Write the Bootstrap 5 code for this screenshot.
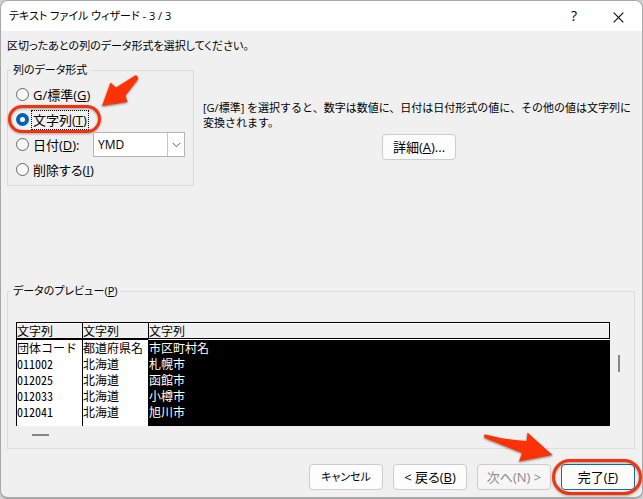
<!DOCTYPE html>
<html lang="ja">
<head>
<meta charset="utf-8">
<meta name="viewport" content="width=device-width, initial-scale=1">
<title>テキスト ファイル ウィザード - 3 / 3</title>
<link href="https://cdn.jsdelivr.net/npm/bootstrap@5.3.0/dist/css/bootstrap.min.css" rel="stylesheet">
<style>
body{background:#cfcfcf;color:#000;font:11px/16px "Open Sans","Noto Sans CJK JP",sans-serif;font-feature-settings:"palt","kern"}
.wizard{background:#f0f0f0;border:1px solid #a8a8a8;border-bottom-width:2px;border-radius:8px;min-height:100vh;overflow:hidden}
.titlebar{background:#fff;height:30px;padding:0 2px 0 8px}
.tool-btn{width:44px;height:28px;border:0;background:none;padding:0;font-size:14px;line-height:28px}
.wizard-body{padding:7px 7px 7px 6px}
.group{border:1px solid #dcdcdc;padding:0}
.group>legend{float:none;width:auto;font-size:11px;line-height:18px;margin:0 0 0 3px;padding:0 2px}
.formats{width:187px;height:125px;margin-top:7px}
.formats>legend{margin-bottom:3px}
.formats .choice{height:25px;padding-left:8px}
.formats .choice label{margin-left:3px;padding:0 1px;font-size:13px;line-height:18px}
.choice input{appearance:none;width:13px;height:13px;border:1px solid #666;border-radius:50%;background:#f7f7f7;margin:0;flex:none}
.choice input:checked{border:4px solid #0560b6;background:#fff}
.choice input:checked+label{outline:1px dotted #000}
.date-select{appearance:none;width:92px;height:25px;border:1px solid #b4b4b4;border-radius:0;background:#fff;padding:0 4px;font:inherit;font-size:12px;color:#000}
.drop{right:1px;top:1px;width:17px;height:23px;border-left:1px solid #c4c4c4;background:#fff;pointer-events:none}
.hint{padding:46px 0 0 9px;line-height:15px}
.hint-text{font-feature-settings:normal;white-space:nowrap}
.push{width:74px;height:26px;border:1px solid #ccc;border-radius:4px;background:#fdfdfd;color:#000;padding:0;font:inherit;font-size:13px}
.push.compact{font-size:11px}
.push:disabled{color:#8a8a8a;background:#f6f6f6}
.push.primary{border-color:#1668b0}
.footer-actions{gap:10px;padding:15px 0 0}
.preview-area{padding:22px 16px 12px 8px}
.data-preview{width:100%;font-family:"Noto Sans CJK JP",sans-serif;font-size:12px;font-feature-settings:"hwid";line-height:16px;border-collapse:separate;border-spacing:0}
.data-preview th{font-weight:400;height:17px;line-height:15px;padding:0;border-top:1px solid #000;border-bottom:1px solid #000;border-left:1px solid #000;box-shadow:inset 0 1px #fff}
.data-preview th:last-child{border-right:1px solid #000}
.data-preview td{height:16px;padding:0;background:#fff;border-left:1px solid #000}
.data-preview td:last-child{background:#000;color:#fff}
.data-preview tbody tr:first-child td{border-top:1px solid #000;height:17px}
.data-preview tbody tr:first-child td:last-child{border-top-color:#fff}
.data-preview tbody tr:last-child td{height:22px;vertical-align:top}
.data-preview .fixed-col{width:66px}
.thumb-x{width:17px;height:2px;background:#868686;margin:8px 0 0 16px}
.thumb-y{width:2px;height:17px;background:#868686;right:-10px;top:33px}
.ring{border:3px solid #f4330c;border-radius:20px;pointer-events:none;filter:drop-shadow(0 1px 1px #0005)}
.ring-choice{left:0;top:-2px;height:28px;width:93px}
.ring-finish{left:-9px;top:-5px;width:90px;height:36px}
.arrow{pointer-events:none;filter:drop-shadow(0 1px 1px #0007)}
.arrow-choice{left:93px;top:-33px}
.arrow-finish{left:-79px;top:-34px}
</style>
<script src="https://cdn.jsdelivr.net/npm/bootstrap@5.3.0/dist/js/bootstrap.bundle.min.js"></script>
</head>
<body>
<main class="wizard d-flex flex-column">
  <header class="titlebar d-flex align-items-center justify-content-between">
    <span>テキスト ファイル ウィザード - 3 / 3</span>
    <div class="d-flex">
      <button class="tool-btn" type="button" aria-label="ヘルプ">?</button>
      <button class="tool-btn" type="button" aria-label="閉じる"><svg width="11" height="11" viewBox="0 0 11 11" stroke="#111" stroke-width="1.2"><path d="M.7.7l9.600 9.600M10.300.7L.7 10.300"/></svg></button>
    </div>
  </header>
  <form class="wizard-body d-flex flex-column flex-grow-1">
    <div>区切ったあとの列のデータ形式を選択してください。</div>
    <div class="d-flex">
      <fieldset class="group formats flex-shrink-0">
        <legend>列のデータ形式</legend>
        <div class="choice d-flex align-items-center"><input type="radio" name="format" id="f-general"><label for="f-general">G/標準(<u>G</u>)</label></div>
        <div class="choice d-flex align-items-center position-relative"><input type="radio" name="format" id="f-text" checked><label for="f-text">文字列(<u>T</u>)</label>
          <span class="ring ring-choice position-absolute"></span>
          <svg class="arrow arrow-choice position-absolute" width="38" height="34" viewBox="0 0 38 34"><path fill="#ff3207" d="M36 2Q38 4 36.500 6L24.500 21.500 26.500 28 1 32 9.500 8.500 15 13.500 34 1.500Q35 .9 36 2Z"/></svg>
        </div>
        <div class="choice d-flex align-items-center"><input type="radio" name="format" id="f-date"><label for="f-date">日付(<u>D</u>):</label>
          <div class="position-relative ms-auto me-2"><select class="date-select" aria-label="日付の形式"><option>YMD</option><option>MDY</option><option>DMY</option></select>
            <span class="drop position-absolute d-flex align-items-center justify-content-center"><svg width="9" height="6" viewBox="0 0 9 6" fill="none" stroke="#666"><path d="M.5.7l4 4 4-4"/></svg></span></div>
        </div>
        <div class="choice d-flex align-items-center"><input type="radio" name="format" id="f-skip"><label for="f-skip">削除する(<u>I</u>)</label></div>
      </fieldset>
      <div class="hint flex-grow-1">
        <div class="hint-text">[G/標準] を選択すると、数字は数値に、日付は日付形式の値に、その他の値は文字列に<br>変換されます。</div>
        <div class="text-center mt-1"><button class="push" type="button">詳細(<u>A</u>)...</button></div>
      </div>
    </div>
    <fieldset class="group mt-auto">
      <legend>データのプレビュー(<u>P</u>)</legend>
      <div class="preview-area">
        <div class="position-relative me-2">
          <table class="data-preview">
            <thead><tr><th class="fixed-col">文字列</th><th class="fixed-col">文字列</th><th>文字列</th></tr></thead>
            <tbody>
              <tr><td>団体コード</td><td>都道府県名</td><td>市区町村名</td></tr>
              <tr><td>011002</td><td>北海道</td><td>札幌市</td></tr>
              <tr><td>012025</td><td>北海道</td><td>函館市</td></tr>
              <tr><td>012033</td><td>北海道</td><td>小樽市</td></tr>
              <tr><td>012041</td><td>北海道</td><td>旭川市</td></tr>
            </tbody>
          </table>
          <span class="thumb-y position-absolute"></span>
        </div>
        <div class="thumb-x"></div>
      </div>
    </fieldset>
    <div class="footer-actions d-flex justify-content-end">
      <button class="push compact" type="button">キャンセル</button>
      <button class="push" type="button">&lt; 戻る(<u>B</u>)</button>
      <button class="push" type="button" disabled>次へ(N) &gt;</button>
      <div class="position-relative"><button class="push primary" type="submit">完了(<u>F</u>)</button>
        <span class="ring ring-finish position-absolute"></span>
        <svg class="arrow arrow-finish position-absolute" width="74" height="34" viewBox="0 0 74 34"><path fill="#ff3207" d="M2.500 4.500Q1 7.500 4 8.500L40 23 37 31.500 70.500 25 45.500 2.500 44.500 11Q24 10 3.500 4.500Z"/></svg>
      </div>
    </div>
  </form>
</main>
</body>
</html>
